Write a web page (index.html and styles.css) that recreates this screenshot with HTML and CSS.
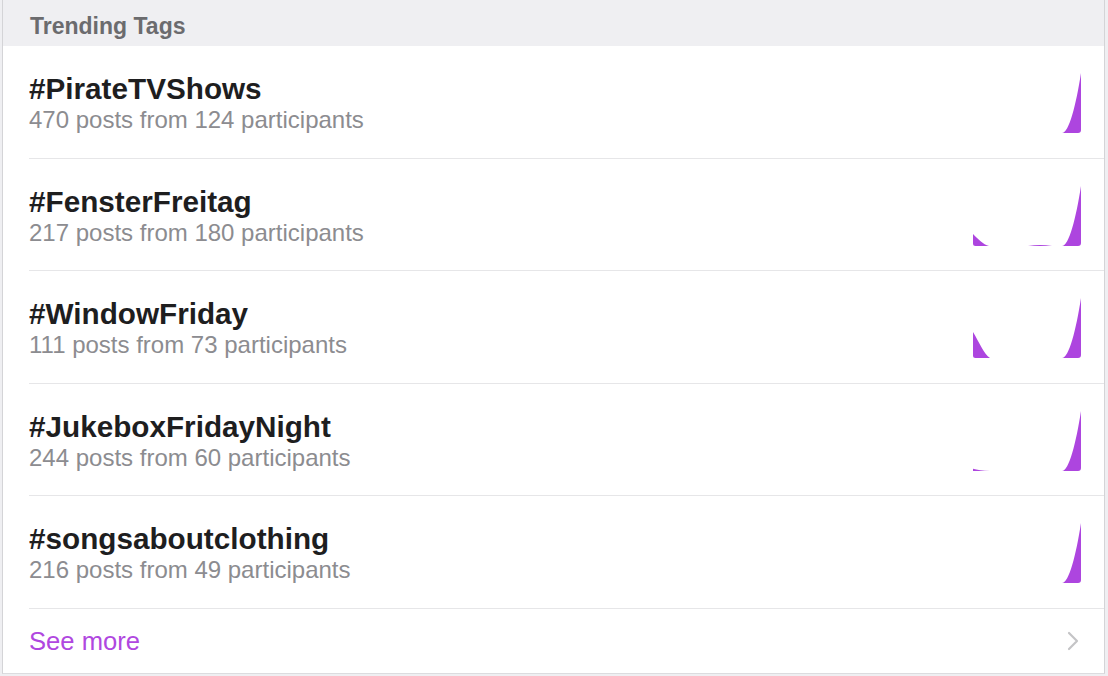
FILE: index.html
```html
<!DOCTYPE html>
<html>
<head>
<meta charset="utf-8">
<link rel="stylesheet" href="styles.css">
</head>
<body>
<div class="card">
  <div class="header">Trending Tags</div>
  <div class="list">
    <div class="row">
      <div class="info">
        <div class="tag">#PirateTVShows</div>
        <div class="meta">470 posts from 124 participants</div>
      </div>
      <svg class="spark" viewBox="0 0 108 60" width="108" height="60">
        <path d="M89,60 C96,60 103,32 108,0 L108,57 Q108,60 105,60 Z"/>
      </svg>
    </div>
    <div class="row">
      <div class="info">
        <div class="tag">#FensterFreitag</div>
        <div class="meta">217 posts from 180 participants</div>
      </div>
      <svg class="spark" viewBox="0 0 108 60" width="108" height="60">
        <path d="M0,48 C5,53 10,58.5 16,60 L2.5,60 Q0,60 0,57.5 Z"/>
        <path d="M55,60 Q67,57.8 79,60 Z"/>
        <path d="M89,60 C96,60 103,32 108,0 L108,57 Q108,60 105,60 Z"/>
      </svg>
    </div>
    <div class="row">
      <div class="info">
        <div class="tag">#WindowFriday</div>
        <div class="meta">111 posts from 73 participants</div>
      </div>
      <svg class="spark" viewBox="0 0 108 60" width="108" height="60">
        <path d="M0,34 C6,44 11,56 17,60 L2.5,60 Q0,60 0,57.5 Z"/>
        <path d="M89,60 C96,60 103,32 108,0 L108,57 Q108,60 105,60 Z"/>
      </svg>
    </div>
    <div class="row">
      <div class="info">
        <div class="tag">#JukeboxFridayNight</div>
        <div class="meta">244 posts from 60 participants</div>
      </div>
      <svg class="spark" viewBox="0 0 108 60" width="108" height="60">
        <path d="M0,57.8 Q6,59.6 17,60 L0,60 Z"/>
        <path d="M89,60 C96,60 103,32 108,0 L108,57 Q108,60 105,60 Z"/>
      </svg>
    </div>
    <div class="row">
      <div class="info">
        <div class="tag">#songsaboutclothing</div>
        <div class="meta">216 posts from 49 participants</div>
      </div>
      <svg class="spark" viewBox="0 0 108 60" width="108" height="60">
        <path d="M89,60 C96,60 103,32 108,0 L108,57 Q108,60 105,60 Z"/>
      </svg>
    </div>
    <div class="more">
      <span class="more-label">See more</span>
      <svg class="chev" viewBox="0 0 12 20" width="12" height="20">
        <path d="M2,2 L10,10 L2,18"/>
      </svg>
    </div>
  </div>
</div>
</body>
</html>
```

FILE: styles.css
```css
html, body {
  margin: 0;
  padding: 0;
  background: #efeff2;
  font-family: "Liberation Sans", Arial, sans-serif;
}

.card {
  margin-left: 2px;
  width: 1101px;
  border-left: 1px solid #d4d4d7;
  border-right: 1px solid #d4d4d7;
  border-bottom: 1px solid #dcdcdf;
  background: #ffffff;
}

.header {
  box-sizing: border-box;
  height: 46px;
  padding: 11px 0 0 27px;
  line-height: 30px;
  font-size: 23px;
  font-weight: bold;
  color: #6b6b6e;
  background: #efeff2;
}

.list {
  margin-left: 26px;
}

.row {
  display: flex;
  align-items: center;
  justify-content: space-between;
  padding: 26px 23px 23.5px 0;
  border-bottom: 1px solid #e6e6e8;
}

.info {
  display: flex;
  flex-direction: column;
}

.tag {
  font-size: 29.7px;
  line-height: 34px;
  font-weight: bold;
  color: #1e1e1f;
}

.meta {
  font-size: 24px;
  line-height: 28px;
  color: #8c8c90;
}

.spark {
  display: block;
  fill: #ad45df;
}

.more {
  display: flex;
  align-items: center;
  justify-content: space-between;
  height: 64px;
  padding-right: 25px;
}

.more-label {
  font-size: 25.6px;
  line-height: 64px;
  color: #b047e0;
}

.chev {
  display: block;
  fill: none;
  stroke: #c4c4c6;
  stroke-width: 2.2;
  stroke-linecap: round;
  stroke-linejoin: round;
}
```
